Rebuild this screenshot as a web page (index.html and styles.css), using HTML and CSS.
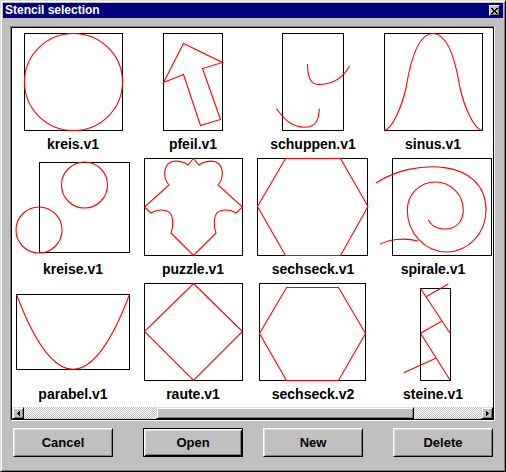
FILE: index.html
```html
<!DOCTYPE html>
<html>
<head>
<meta charset="utf-8">
<link rel="stylesheet" href="styles.css">
</head>
<body>
<div class="window">
  <div class="titlebar">
    <span class="title">Stencil selection</span>
    <span class="close"><svg class="xglyph" width="7" height="6" viewBox="0 0 7 6"><path d="M0 0h2v1H0zM5 0h2v1H5zM1 1h2v1H1zM4 1h2v1H4zM2 2h3v2H2zM1 4h2v1H1zM4 4h2v1H4zM0 5h2v1H0zM5 5h2v1H5z"/></svg></span>
  </div>
  <div class="listbox">
    <div class="grid">
      <div class="item">
        <svg class="thumb" viewBox="0 0 120 98">
          <rect class="frame" x="11.5" y="0.5" width="98" height="97"/>
          <ellipse class="red" cx="60.5" cy="49" rx="49" ry="48.5"/>
        </svg>
        <div class="label">kreis.v1</div>
      </div>
      <div class="item">
        <svg class="thumb" viewBox="0 0 120 98">
          <rect class="frame" x="30.5" y="0.5" width="59" height="97"/>
          <polygon class="red" points="50.5,10.5 89.5,29.5 69.5,35.5 87.5,86.5 67.5,92.5 50.5,41.5 30.5,49.5"/>
        </svg>
        <div class="label">pfeil.v1</div>
      </div>
      <div class="item">
        <svg class="thumb" viewBox="0 0 120 98">
          <rect class="frame" x="29.5" y="0.5" width="61" height="97"/>
          <path class="red" d="M54.5,31 C54.5,45 58,52 67,51.5 C80,51 90,45 96.5,33"/>
          <path class="red" d="M23.5,75.5 C32,88 40,94 52,94.3 C62,94 66,88 66.3,75.5"/>
        </svg>
        <div class="label">schuppen.v1</div>
      </div>
      <div class="item">
        <svg class="thumb" viewBox="0 0 120 98">
          <rect class="frame" x="11.5" y="0.5" width="98" height="97"/>
          <path class="red" d="M11,97.5 C20,96 29,72 33,55 C37,30 45,0.5 60,0.5 C75,0.5 83,30 87,55 C91,72 100,96 109.5,97.5"/>
        </svg>
        <div class="label">sinus.v1</div>
      </div>

      <div class="item">
        <svg class="thumb" viewBox="0 0 120 98">
          <rect class="frame" x="26.5" y="4.5" width="90" height="90"/>
          <circle class="red" cx="71.5" cy="27" r="23"/>
          <circle class="red" cx="26" cy="72" r="23"/>
        </svg>
        <div class="label">kreise.v1</div>
      </div>
      <div class="item">
        <svg class="thumb" viewBox="0 0 120 98">
          <rect class="frame" x="11.5" y="0.5" width="98" height="97"/>
          <path class="red" d="M60.5,0.5 L55,7 C52,4 44,2 38,4 C31,7 29,19 36,27 L11.5,49 L18,55 C24,51 33,51 37,55 C41,60 40,70 38,75 L60.5,97.5 L83,75 C81,70 80,60 84,55 C88,51 97,51 103,55 L109.5,49 L85,27 C92,19 90,7 83,4 C77,2 69,4 66,7 Z"/>
        </svg>
        <div class="label">puzzle.v1</div>
      </div>
      <div class="item">
        <svg class="thumb" viewBox="0 0 120 98">
          <rect class="frame" x="4.5" y="0.5" width="110" height="97"/>
          <polygon class="red" points="32.5,0.5 87.5,0.5 115,48.5 87.5,97.5 32.5,97.5 4.5,48.5"/>
        </svg>
        <div class="label">sechseck.v1</div>
      </div>
      <div class="item">
        <svg class="thumb" viewBox="0 0 120 98">
          <rect class="frame" x="19.5" y="0.5" width="99" height="97"/>
          <path class="red" d="M3,25 C40,0 113,0 113,52 A39.35,42 0 0 1 34.3,52 A28,28 0 0 1 90.3,52 C90.3,66 80,71.3 72,71 C64,71 58,67 55.3,62"/>
          <path class="red" d="M7,86.3 C15,82 30,79 45,83"/>
        </svg>
        <div class="label">spirale.v1</div>
      </div>

      <div class="item">
        <svg class="thumb" viewBox="0 0 120 98">
          <rect class="frame" x="3.5" y="11.5" width="113" height="75"/>
          <path class="red" d="M3.5,11.5 Q60,161 116.5,11.5"/>
        </svg>
        <div class="label">parabel.v1</div>
      </div>
      <div class="item">
        <svg class="thumb" viewBox="0 0 120 98">
          <rect class="frame" x="11.5" y="0.5" width="98" height="97"/>
          <polygon class="red" points="60.5,0.5 109.5,48.5 60.5,97.5 11.5,48.5"/>
        </svg>
        <div class="label">raute.v1</div>
      </div>
      <div class="item">
        <svg class="thumb" viewBox="0 0 120 98">
          <rect class="frame" x="6.5" y="0.5" width="106" height="97"/>
          <polygon class="red" points="33.5,4.5 85.5,4.5 112.5,50.5 85.5,97.5 33.5,97.5 6.5,50.5"/>
        </svg>
        <div class="label">sechseck.v2</div>
      </div>
      <div class="item">
        <svg class="thumb" viewBox="0 0 120 98">
          <rect class="frame" x="47.5" y="5.5" width="30" height="92"/>
          <path class="red" d="M47.5,5.5 L77,50 M53,13.7 L75.3,1 M47.5,50.3 L69.3,37.7 M47.5,50.3 L77,97 M62.7,75.3 L30.7,89.7"/>
        </svg>
        <div class="label">steine.v1</div>
      </div>
    </div>
    <div class="hscroll">
      <div class="arrow"><svg width="3" height="5" viewBox="0 0 3 5"><path d="M0 2h1v1H0zM1 1h1v3H1zM2 0h1v5H2z"/></svg></div>
      <div class="track"><div class="knob"></div></div>
      <div class="arrow"><svg width="3" height="5" viewBox="0 0 3 5"><path d="M0 0h1v5H0zM1 1h1v3H1zM2 2h1v1H2z"/></svg></div>
    </div>
  </div>
  <div class="buttons">
    <button class="btn">Cancel</button>
    <button class="btn default gap-wide">Open</button>
    <button class="btn gap-narrow">New</button>
    <button class="btn gap-wide">Delete</button>
  </div>
</div>
</body>
</html>
```

FILE: styles.css
```css
html, body {
  margin: 0;
  padding: 0;
  background: #c0c0c0;
}

.window {
  width: 506px;
  height: 472px;
  box-sizing: border-box;
  background: #c0c0c0;
  border: 1px solid;
  border-color: #dfdfdf #000 #000 #dfdfdf;
  box-shadow: inset 1px 1px #fff, inset -1px -1px #808080;
  padding: 2px;
  font-family: "Liberation Sans", Arial, sans-serif;
}

.titlebar {
  height: 15px;
  background: #000080;
  color: #fff;
  display: flex;
  justify-content: space-between;
  align-items: flex-start;
}

.title {
  font-weight: bold;
  font-size: 12px;
  line-height: 15px;
  padding-left: 2px;
}

.close {
  width: 11px;
  height: 11px;
  box-sizing: border-box;
  margin: 2px 3px 0 0;
  background: #c0c0c0;
  border: 1px solid;
  border-color: #fff #000 #000 #fff;
  box-shadow: inset -1px -1px #808080;
  display: flex;
  align-items: center;
  justify-content: center;
}

.xglyph {
  display: block;
  fill: #000;
  shape-rendering: crispEdges;
}

.listbox {
  margin: 8px 0 0 7px;
  width: 485px;
  height: 395px;
  box-sizing: border-box;
  background: #fff;
  border: 1px solid;
  border-color: #808080 #fff #fff #808080;
  box-shadow: inset 0 0 0 1px #000;
  padding: 1px;
}

.grid {
  display: grid;
  grid-template-columns: repeat(4, 120px);
  row-gap: 6px;
  padding: 5px 0 0 1px;
}

.item {
  display: flex;
  flex-direction: column;
  align-items: center;
}

.thumb {
  display: block;
  width: 120px;
  height: 98px;
  overflow: visible;
}

.frame {
  fill: none;
  stroke: #000;
  stroke-width: 1;
  shape-rendering: crispEdges;
}

.red {
  fill: none;
  stroke: #ff0000;
  stroke-width: 1.1;
}

.label {
  margin-top: 5px;
  font-size: 14px;
  line-height: 16px;
  font-weight: bold;
  color: #000;
  white-space: nowrap;
}

.hscroll {
  margin-top: 5px;
  height: 12px;
  display: flex;
}

.arrow {
  width: 12px;
  height: 12px;
  box-sizing: border-box;
  background: #c0c0c0;
  border: 1px solid;
  border-color: #dfdfdf #000 #000 #dfdfdf;
  box-shadow: inset 1px 1px #fff, inset -1px -1px #808080;
  display: flex;
  align-items: center;
  justify-content: center;
}

.arrow svg {
  display: block;
  fill: #000;
  shape-rendering: crispEdges;
}

.track {
  flex: 1;
  display: flex;
  background: repeating-conic-gradient(#c0c0c0 0 25%, #fff 0 50%) 0 0 / 2px 2px;
}

.knob {
  margin-left: 132px;
  width: 258px;
  height: 12px;
  box-sizing: border-box;
  background: #c0c0c0;
  border: 1px solid;
  border-color: #dfdfdf #000 #000 #dfdfdf;
  box-shadow: inset 1px 1px #fff, inset -1px -1px #808080;
}

.buttons {
  display: flex;
  margin: 7px 0 0 10px;
}

.btn {
  width: 100px;
  height: 29px;
  box-sizing: border-box;
  margin: 0;
  padding: 0;
  background: #c0c0c0;
  border: 1px solid;
  border-color: #fff #000 #000 #fff;
  box-shadow: inset 1px 1px #dfdfdf, inset -1px -1px #808080;
  font-family: "Liberation Sans", Arial, sans-serif;
  font-weight: bold;
  font-size: 13px;
  color: #000;
  display: flex;
  align-items: center;
  justify-content: center;
  border-radius: 0;
  outline: none;
}

.btn.default {
  border-color: #000;
  box-shadow: inset 1px 1px #fff, inset -1px -1px #000, inset 2px 2px #dfdfdf, inset -2px -2px #808080;
}

.gap-wide {
  margin-left: 30px;
}

.gap-narrow {
  margin-left: 20px;
}
```
